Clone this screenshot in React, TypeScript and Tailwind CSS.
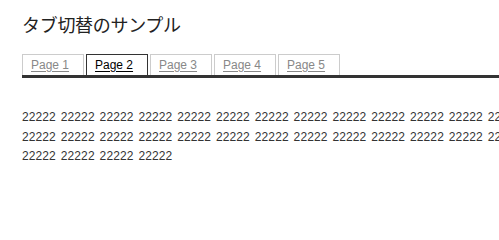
import { useState } from "react";

const TABS = ["Page 1", "Page 2", "Page 3", "Page 4", "Page 5"];

const WORDS_PER_LINE = 14;

function line(n: number) {
  return Array.from({ length: n }, () => "22222").join(" ");
}

export default function App() {
  const [active, setActive] = useState(1);

  return (
    <div className="h-[219px] w-full overflow-hidden bg-white font-['Liberation_Sans','Noto_Sans_CJK_JP',sans-serif] text-[#333]">
      <h1 className="ml-[22px] pt-[12px] font-['Noto_Sans_CJK_JP',sans-serif] text-[18px] font-normal leading-[24px] tracking-[-0.3px] text-[#222]">
        タブ切替のサンプル
      </h1>

      <div className="ml-[22px] mt-[18px] flex gap-[2px] border-b-[3px] border-[#333]">
        {TABS.map((t, i) => (
          <button
            key={t}
            type="button"
            onClick={() => setActive(i)}
            className={`h-[21px] w-[62px] border border-b-0 pl-[8px] text-left text-[12px] leading-[19px] underline underline-offset-[2px] ${
              active === i ? "border-[#333] text-black" : "border-[#ccc] text-[#888]"
            }`}
          >
            {t}
          </button>
        ))}
      </div>

      <div className="ml-[22px] mt-[30px] w-[900px] text-[12px] leading-[19.5px] tracking-[0.1px] [word-spacing:1.5px]">
        <p className="whitespace-nowrap">{line(WORDS_PER_LINE)}</p>
        <p className="whitespace-nowrap">{line(WORDS_PER_LINE)}</p>
        <p className="whitespace-nowrap">{line(4)}</p>
      </div>
    </div>
  );
}
